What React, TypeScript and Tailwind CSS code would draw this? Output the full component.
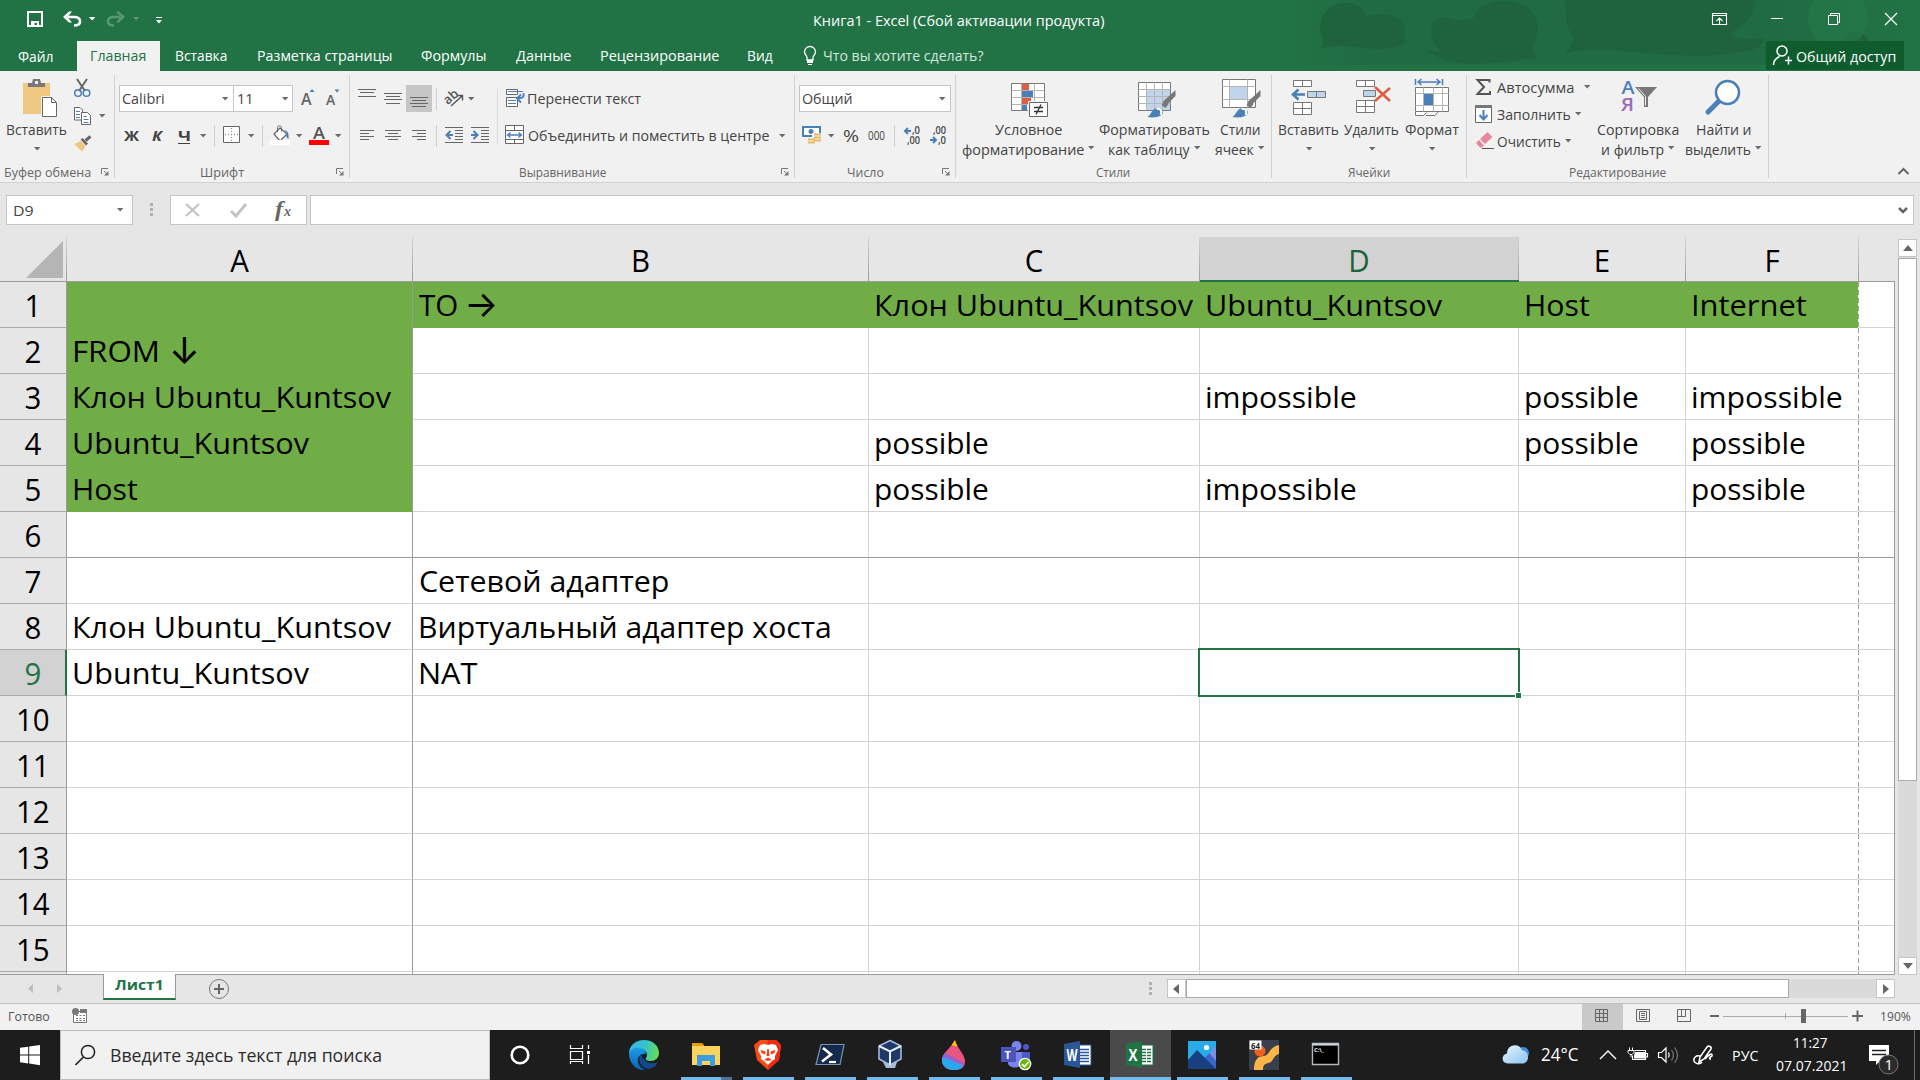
import React, { useLayoutEffect, useRef } from "react";

type TProps = { children: string; className?: string };

/* A single line of text whose glyphs are fitted to the width of its box. */
function T({ children, className = "" }: TProps) {
  const outer = useRef<HTMLSpanElement>(null);
  const inner = useRef<HTMLSpanElement>(null);
  useLayoutEffect(() => {
    if (!outer.current || !inner.current) return;
    const cs = getComputedStyle(inner.current);
    const ctx = document.createElement("canvas").getContext("2d");
    if (!ctx) return;
    ctx.font = `${cs.fontStyle} ${cs.fontWeight} ${cs.fontSize} ${cs.fontFamily}`;
    const m = ctx.measureText(children);
    const ink = m.actualBoundingBoxLeft + m.actualBoundingBoxRight;
    const s = outer.current.getBoundingClientRect().width / ink;
    inner.current.style.transform = `translateX(${m.actualBoundingBoxLeft * s}px) scaleX(${s})`;
  }, [children]);
  return (
    <span ref={outer} className={`inline-block shrink-0 whitespace-nowrap text-left ${className}`}>
      <span ref={inner} className="inline-block origin-left">
        {children}
      </span>
    </span>
  );
}

type IProps = { x: number; y: number; w: number; h: number; className?: string; children?: React.ReactNode };
function I({ x, y, w, h, className = "", children }: IProps) {
  return (
    <svg width={w} height={h} viewBox={`${x} ${y} ${w} ${h}`} className={`block shrink-0 ${className}`} fill="none">
      {children}
    </svg>
  );
}

function Caret({ className = "", color = "#6a6a6a" }: { className?: string; color?: string }) {
  return (
    <svg width="7" height="4" viewBox="0 0 7 4" className={`block shrink-0 ${className}`}>
      <path d="M0 0h6.4L3.2 3.5z" fill={color} />
    </svg>
  );
}

function Launcher() {
  return (
    <svg width="8" height="8" viewBox="0 0 8 8" className="ml-auto mr-[5px] block" fill="none">
      <path d="M.5 6V.5H7M3 3l3 3" stroke="#777" />
      <path d="M7.5 3v4.5H3z" fill="#777" />
    </svg>
  );
}

const Sep = ({ className = "" }: { className?: string }) => <span className={`h-[22px] w-px shrink-0 bg-[#d0d0d0] ${className}`} />;

function Group({ className, label, launcher = false, children }: { className: string; label: React.ReactNode; launcher?: boolean; children: React.ReactNode }) {
  return (
    <div className={`flex h-[111px] shrink-0 ${className}`}>
      <div className="flex min-w-0 flex-1 flex-col">
        <div className="flex h-[93px]">{children}</div>
        <div className="flex h-[16px] items-center text-[13px] leading-[16px] text-[#666]">
          {label}
          {launcher && <Launcher />}
        </div>
      </div>
      <div className="my-1 w-px bg-[#d2d2d2]" />
    </div>
  );
}

function Big({ x, w, className = "", icon, line1, line2 }: { x: number; w: number; className?: string; icon: React.ReactNode; line1: React.ReactNode; line2?: React.ReactNode }) {
  return (
    <div className={`flex shrink-0 flex-col items-center leading-5 ${className}`}>
      <I x={x} y={71} w={w} h={48}>{icon}</I>
      <div className="flex h-5">{line1}</div>
      <div className="flex h-5 items-center justify-center">
        {line2}
        <Caret className={line2 ? "-mt-0.5 ml-1" : "ml-px"} />
      </div>
    </div>
  );
}

const G = "#777";
const B = "#4a7fb8";

function TitleBar() {
  return (
    <div className="relative h-[71px] bg-[#217346] text-[15px] text-white">
      <svg width="640" height="65" viewBox="1280 0 640 65" className="absolute left-[1280px] top-0">
        <defs>
          <linearGradient id="fade" x1="0" x2="1" y1="0" y2="0">
            <stop offset="0" stopColor="#206b42" stopOpacity="0" />
            <stop offset=".15" stopColor="#206b42" />
            <stop offset=".75" stopColor="#206b42" />
            <stop offset="1" stopColor="#217346" />
          </linearGradient>
        </defs>
        <path d="M1280 0h640v65h-640z" fill="url(#fade)" />
        <path d="M1320 49c6-6 2-12 0-19 0-18 12-28 27-27 9 0 16 5 20 13 12-3 25-2 33 3 8 7 4 16 4 21 6 2-6 8-14 8-20 4-52-7-70 1zM1431 31c0-12 8-16 20-12 9 4 14-2 21 1 6-14 18-20 33-19 20 0 33 13 33 28 0 8-4 14-6 20l5 11c-12-4-24 4-42 2-20 3-50 3-69-12 5 2 12 1 16 2-7-6-11-12-11-21zM1565 0h189c2 18-14 26-24 34 8 6 24 6 35 4-4 10-12 14-26 14-52 10-110-4-151-1-10 0-18 0-23 4 4-9 12-15 6-21-6-10-4-22-6-34zM1843 41c4-12 20-12 26 0z" fill="#1f633c" />
        <circle cx="1838" cy="18" r="30" fill="#247a4b" opacity=".6" />
      </svg>
      <div className="relative flex h-[41px]">
        <I x={26} y={0} w={18} h={41} className="ml-[26px]">
          <path d="M28 12h14v14H28z" stroke="#fff" strokeWidth="2" />
          <path d="M31 21h8v5h-2v-3h-2.500v3H31z" fill="#fff" />
        </I>
        <I x={62} y={0} w={20} h={41} className="ml-[18px]">
          <path d="M68 17h6c4 0 6 2 6 4.500S78 25.500 74 25.500" stroke="#fff" strokeWidth="2.600" />
          <path d="M69 11.500 63 17l6 5.500h3L67.500 17 72 11.500z" fill="#fff" />
        </I>
        <Caret color="#fff" className="ml-[7px] mt-[17px]" />
        <I x={106} y={0} w={20} h={41} className="ml-[10px] opacity-25">
          <path d="M120 17h-6c-4 0-6 2-6 4.500s2 4 6 4" stroke="#fff" strokeWidth="2.600" />
          <path d="m119 11.500 6 5.500-6 5.500h-3l4.500-5.500-4.500-5.500z" fill="#fff" />
        </I>
        <Caret color="#5b9675" className="ml-[7px] mt-[17px]" />
        <I x={155} y={0} w={8} h={41} className="ml-[15px]">
          <path d="M156 17.500h6" stroke="#fff" />
          <path d="M156 20h6l-3 3.500z" fill="#fff" />
        </I>
        <T className="ml-[651px] w-[290px] leading-[41px]">Книга1 - Excel (Сбой активации продукта)</T>
        <I x={1711} y={0} w={17} h={41} className="ml-[607px]">
          <path d="M1712.500 13.500h14v11h-14zM1712.500 15.500h14M1719.500 24v-6m-3 3 3-3 3 3" stroke="#fff" strokeWidth="1.100" />
        </I>
        <I x={1770} y={0} w={14} h={41} className="ml-[42px]">
          <path d="M1771 18.500h12" stroke="#fff" />
        </I>
        <I x={1827} y={0} w={14} h={41} className="ml-[43px]">
          <path d="M1828.500 15.500h9v9h-9zM1830.500 15v-1.500h9v9h-2" stroke="#fff" />
        </I>
        <I x={1884} y={0} w={14} h={41} className="ml-[43px]">
          <path d="m1885 13 12 12m0-12-12 12" stroke="#fff" strokeWidth="1.200" />
        </I>
      </div>
      <div className="relative flex h-[30px] leading-[29px]">
        <T className="ml-[18px] mt-px w-[35px]">Файл</T>
        <div className="ml-[24px] flex w-[83px] bg-[#f1f1f1] text-[#217346]">
          <T className="ml-[14px] w-[55px]">Главная</T>
        </div>
        <T className="ml-[16px] w-[51px]">Вставка</T>
        <T className="ml-[31px] w-[134px]">Разметка страницы</T>
        <T className="ml-[29px] w-[65px]">Формулы</T>
        <T className="ml-[30px] w-[55px]">Данные</T>
        <T className="ml-[30px] w-[118px]">Рецензирование</T>
        <T className="ml-[29px] w-[25px]">Вид</T>
        <I x={802} y={41} w={16} h={30} className="ml-[29px]">
          <path d="M807 60v-2.500c0-2-2.500-3-2.500-5.500a5.500 5.500 0 0 1 11 0c0 2.500-2.500 3.500-2.500 5.500V60z" stroke="#fff" strokeWidth="1.300" />
          <path d="M807 60h6v3h-6zM808 64h4v1h-4z" fill="#fff" />
        </I>
        <T className="ml-[6px] w-[160px] text-[#d3e6dc]">Что вы хотите сделать?</T>
        <div className="ml-[782px] flex h-[29px] w-[138px] bg-[#0f5c2f]">
          <I x={1766} y={41} w={28} h={29}>
            <circle cx="1782" cy="51" r="5" stroke="#fff" strokeWidth="1.500" />
            <path d="M1773.500 65c0-5 3-7 6-8.500M1785 60.500h7m-3.500-4v8" stroke="#fff" strokeWidth="1.500" />
          </I>
          <T className="ml-[2px] w-[99px] leading-[31px]">Общий доступ</T>
        </div>
      </div>
    </div>
  );
}

const lines = (rows: [number, number, number][], color = "#666") =>
  rows.map(([x1, x2, y], i) => <path key={i} d={`M${x1} ${y}H${x2}`} stroke={color} />);

const brush = (x: number, y: number) => (
  <g>
    <path d={`M${x + 28} ${y}v6l-9 9-4-3z`} fill="#777" />
    <path d={`m${x + 17} ${y + 11} 4 3-3 4-4-3z`} fill="#777" />
    <path d={`M${x} ${y + 27}c3-2 4-6 7-8 4-3 10 1 8 5-2 3-9 4-15 3z`} fill={B} />
    <path d={`M${x + 9} ${y + 19}c4-1 6 2 4 6`} stroke="#fff" strokeWidth="2" />
  </g>
);

function Ribbon() {
  return (
    <div className="flex h-[112px] border-b border-[#d2d2d2] bg-[#f1f1f1] text-[15px] text-[#444]">
      <Group className="w-[115px]" launcher label={<T className="ml-[5px] w-[86px]">Буфер обмена</T>}>
        <Big
          className="w-[73px]"
          x={0}
          w={73}
          icon={
            <>
              <path d="M23 83h27v31H23z" fill="#edc87e" />
              <path d="M28 87v-4h4l1-4h7l1 4h4v4z" fill="#777" />
              <path d="M35 81h3v3h-3z" fill="#f1f1f1" />
              <path d="M41 96h16v22H41z" fill="#f1f1f1" />
              <path d="M42.500 97.500h9l5 5v14h-14zM51.500 97.500v5h5" fill="#fff" stroke="#666" />
            </>
          }
          line1={<T className="w-[60px]">Вставить</T>}
        />
        <div className="flex flex-col">
          <I x={73} y={77} w={20} h={25} className="mt-[6px]">
            <path d="m77 79 8 12M87 79l-8 12" stroke="#666" strokeWidth="2" />
            <circle cx="78" cy="93" r="3.300" stroke={B} strokeWidth="1.500" />
            <circle cx="86.500" cy="93" r="3.300" stroke={B} strokeWidth="1.500" />
          </I>
          <div className="flex">
            <I x={73} y={102} w={20} h={28}>
              <path d="M74.500 107.500h5.500l2.500 2.500v10h-8z" fill="#fff" stroke="#666" />
              <path d="M81.500 112.500h6l3 3v9h-9z" fill="#fff" stroke="#666" />
              <path d="M76 111.500h4M76 114.500h4M76 117.500h4M83.500 116.500h3M83.500 119.500h5M83.500 122.500h5" stroke={B} />
            </I>
            <Caret className="ml-[6px] mt-[12px]" />
          </div>
          <I x={73} y={130} w={20} h={25}>
            <path d="m74.500 144 6-3 5 5-3 5.500c-3-2-5-4-8-7.500z" fill="#edc87e" />
            <path d="m80.500 139.500 2-1.500 5.500 5.500-2 2z" fill="#666" />
            <path d="m85.500 140.500 5-4" stroke="#666" strokeWidth="3" />
          </I>
        </div>
      </Group>

      <Group className="w-[235px]" launcher label={<T className="ml-[86px] w-[43px]">Шрифт</T>}>
        <div className="flex flex-col">
          <div className="mt-[14px] flex h-[27px]">
            <div className="ml-[4px] flex w-[115px] items-center border border-[#c6c6c6] bg-white">
              <T className="ml-[2px] w-[42px]">Calibri</T>
              <Caret className="ml-auto mr-[4px]" />
            </div>
            <div className="-ml-px flex w-[60px] items-center border border-[#c6c6c6] bg-white">
              <T className="ml-[4px] w-[13px]">11</T>
              <Caret className="ml-auto mr-[3px]" />
            </div>
            <I x={299} y={85} w={20} h={27} className="ml-[6px]">
              <text x="301" y="105" fontSize="16" fontWeight="600" fill="#666" textLength="11">A</text>
              <path d="m309.500 92 2.500-3 2.500 3z" fill={B} />
            </I>
            <I x={324} y={85} w={20} h={27} className="ml-[5px]">
              <text x="326" y="105" fontSize="14" fontWeight="600" fill="#666" textLength="10">A</text>
              <path d="m334.500 89.500 2.500 3 2.500-3z" fill={B} />
            </I>
          </div>
          <div className="mt-[10px] flex h-[27px] items-center font-bold">
            <T className="ml-[9px] w-[16px]">Ж</T>
            <T className="ml-[12px] w-[12px] italic">К</T>
            <T className="ml-[14px] w-[12px] border-b border-[#444] leading-[15px]">Ч</T>
            <Caret className="ml-[10px]" />
            <Sep className="ml-[7px]" />
            <I x={222} y={122} w={19} h={27} className="ml-[7px]">
              <path d="M223.500 126.500h16v16h-16z" fill="#fff" stroke="#666" />
              <path d="M231.500 128v14M225 134.500h14" stroke="#888" strokeDasharray="1 2" strokeWidth="1.300" />
            </I>
            <Caret className="ml-[7px]" />
            <Sep className="ml-[7px]" />
            <I x={269} y={122} w={22} h={27} className="ml-[6px]">
              <path d="m274 134 6-6 7 6-7 7z" fill="#fff" stroke="#666" strokeWidth="1.200" />
              <path d="M277.500 132v-4.500c0-2 4-2 4 0v4" stroke="#666" />
              <path d="M284 130c4 1 5 3 4.500 9-2-1-3-3-2-6z" fill={B} />
              <path d="M270 140h20v5h-20z" fill="#fff" />
            </I>
            <Caret className="ml-[5px]" />
            <I x={308} y={122} w={22} h={27} className="ml-[5px]">
              <text x="313" y="139" fontSize="17" fontWeight="600" fill="#555" textLength="12" lengthAdjust="spacingAndGlyphs">A</text>
              <path d="M309 140h20v5h-20z" fill="#f00" />
            </I>
            <Caret className="ml-[5px]" />
          </div>
        </div>
      </Group>

      <Group className="w-[445px]" launcher label={<T className="ml-[170px] w-[86px]">Выравнивание</T>}>
        <div className="flex w-[147px] flex-col">
          <div className="mt-[14px] flex h-[27px] items-center">
            <I x={354} y={85} w={26} h={27} className="ml-[4px]">
              {lines([[358, 376, 89.500], [360, 374, 92.500], [358, 376, 96.500]])}
            </I>
            <I x={380} y={85} w={26} h={27}>
              {lines([[384, 402, 93.500], [386, 400, 96.500], [384, 402, 99.500], [386, 400, 103.500]])}
            </I>
            <I x={406} y={85} w={26} h={27} className="bg-[#c6c6c6]">
              {lines([[410, 428, 97.500], [412, 426, 100.500], [410, 428, 103.500], [412, 426, 106.500]])}
            </I>
            <Sep className="ml-[4px]" />
            <I x={443} y={85} w={22} h={27} className="ml-[6px]">
              <text x="445" y="104" fontSize="13" fill="#555" fontWeight="600" transform="rotate(-42 448 101)">ab</text>
              <path d="m451 106 11-10m-4.500-.500h5v5" stroke="#555" strokeWidth="1.400" />
            </I>
            <Caret className="ml-[3px]" />
          </div>
          <div className="mt-[10px] flex h-[27px] items-center">
            <I x={354} y={122} w={26} h={27} className="ml-[4px]">
              {lines([[360, 374, 130.500], [360, 369, 133.500], [360, 374, 136.500], [360, 369, 139.500]])}
            </I>
            <I x={380} y={122} w={26} h={27}>
              {lines([[385, 401, 130.500], [388, 398, 133.500], [385, 401, 136.500], [388, 398, 139.500]])}
            </I>
            <I x={406} y={122} w={26} h={27}>
              {lines([[412, 426, 130.500], [417, 426, 133.500], [412, 426, 136.500], [417, 426, 139.500]])}
            </I>
            <Sep className="ml-[4px]" />
            <I x={443} y={122} w={22} h={27} className="ml-[6px]">
              {lines([[445, 463, 127.500], [455, 463, 130.500], [455, 463, 133.500], [455, 463, 136.500], [455, 463, 139.500], [445, 463, 142.500]])}
              <path d="M453 135h-6m3.500-4-4 4 4 4" stroke={B} strokeWidth="2" />
            </I>
            <I x={469} y={122} w={22} h={27} className="ml-[4px]">
              {lines([[471, 489, 127.500], [481, 489, 130.500], [481, 489, 133.500], [481, 489, 136.500], [481, 489, 139.500], [471, 489, 142.500]])}
              <path d="M471 135h6m-3.500-4 4 4-4 4" stroke={B} strokeWidth="2" />
            </I>
          </div>
        </div>
        <div className="mt-[18px] h-[56px] w-px bg-[#dcdcdc]" />
        <div className="flex flex-col">
          <div className="mt-[14px] flex h-[27px] items-center">
            <I x={504} y={85} w={22} h={27} className="ml-[6px]">
              <path d="M506.500 89.500h11v5h-11zM506.500 97.500h11v9h-11z" fill="#fff" stroke="#666" />
              <path d="M508 91.500h15M508 100.500h8M508 103.500h8" stroke={B} strokeWidth="1.200" />
              <path d="M523.500 93c1 4-1 5.500-6 5.500m3.500-4-4 4 4 4" stroke={B} strokeWidth="1.800" />
            </I>
            <T className="ml-[2px] w-[113px]">Перенести текст</T>
          </div>
          <div className="mt-[10px] flex h-[27px] items-center">
            <I x={504} y={122} w={22} h={27} className="ml-[6px]">
              <path d="M505.500 125.500h18v18h-18zM505.500 130.500h18M505.500 139.500h18M514.500 125.500v5M514.500 139.500v4" fill="#fff" stroke="#666" />
              <path d="M507.500 135h14m-11-2.500-3 2.500 3 2.500m8-5 3 2.500-3 2.500" stroke={B} strokeWidth="1.300" />
            </I>
            <T className="ml-[2px] w-[241px]">Объединить и поместить в центре</T>
            <Caret className="ml-[10px]" />
          </div>
        </div>
      </Group>

      <Group className="w-[161px]" launcher label={<T className="ml-[53px] w-[36px]">Число</T>}>
        <div className="flex flex-col">
          <div className="ml-[4px] mt-[14px] flex h-[27px] w-[152px] items-center border border-[#c6c6c6] bg-white">
            <T className="ml-[2px] w-[50px]">Общий</T>
            <Caret className="ml-auto mr-[4px]" />
          </div>
          <div className="mt-[10px] flex h-[27px] items-center">
            <I x={801} y={122} w={23} h={27} className="ml-[6px]">
              <path d="M802 126h19v11h-19z" fill={B} />
              <path d="M804 128h15v7h-15z" fill="#fff" />
              <circle cx="811" cy="131.500" r="2.500" fill={B} />
              <path d="M812 133h10v12h-15v-7h5z" fill="#f1f1f1" />
              <path d="M814 134.500h7M814 137.500h7M814 140.500h7M808 139.500h7M808 142.500h7" stroke="#e6b96a" strokeWidth="2" />
            </I>
            <Caret className="ml-[4px]" />
            <T className="ml-[8px] w-[16px] text-[17px]">%</T>
            <T className="ml-[9px] w-[17px] text-[12px]">000</T>
            <Sep className="ml-[9px]" />
            <I x={903} y={122} w={18} h={27} className="ml-[8px]">
              <path d="M911 131h-6m3-3-3 3 3 3" stroke={B} strokeWidth="2" />
              <text x="912" y="134" fontSize="10" fill="#444" fontWeight="600" textLength="8" lengthAdjust="spacingAndGlyphs">,0</text>
              <text x="907" y="144" fontSize="10" fill="#444" fontWeight="600" textLength="13" lengthAdjust="spacingAndGlyphs">,00</text>
            </I>
            <I x={929} y={122} w={18} h={27} className="ml-[8px]">
              <path d="M930 140h6m-3-3 3 3-3 3" stroke={B} strokeWidth="2" />
              <text x="933" y="134" fontSize="10" fill="#444" fontWeight="600" textLength="13" lengthAdjust="spacingAndGlyphs">,00</text>
              <text x="938" y="144" fontSize="10" fill="#444" fontWeight="600" textLength="8" lengthAdjust="spacingAndGlyphs">,0</text>
            </I>
          </div>
        </div>
      </Group>

      <Group className="w-[316px]" label={<T className="ml-[140px] w-[34px]">Стили</T>}>
        <Big
          className="ml-[3px] w-[138px]"
          x={959}
          w={138}
          icon={
            <>
              <path d="M1011.500 83.500h33v27h-33z" fill="#fff" stroke={G} />
              <path d="M1011.500 90.500h33M1011.500 97.500h33M1011.500 104.500h33M1021.500 83.500v27M1034.500 83.500v27" stroke="#b5b5b5" />
              <path d="M1022 84h7v6h-7zM1022 98h9v6h-9z" fill="#dc5f41" />
              <path d="M1022 91h11v6h-11zM1022 105h5v5h-5z" fill={B} />
              <path d="M1028 101h22v17h-22z" fill="#f1f1f1" />
              <path d="M1029.500 102.500h18v14h-18z" fill="#fff" stroke="#666" />
              <path d="M1034 107.500h9M1034 111.500h9M1041 104.500l-5 10" stroke="#333" strokeWidth="1.300" />
            </>
          }
          line1={<T className="w-[67px]">Условное</T>}
          line2={<T className="w-[122px]">форматирование</T>}
        />
        <Big
          className="w-[115px]"
          x={1097}
          w={115}
          icon={
            <>
              <path d="M1138.500 82.500h32v28h-32z" fill="#fff" stroke={G} />
              <path d="M1147 90h23v20h-23z" fill="#c0d4ea" />
              <path d="M1138.500 89.500h32M1138.500 96.500h32M1138.500 103.500h32M1146.500 82.500v28M1154.500 82.500v28M1162.500 82.500v28" stroke="#b5b5b5" />
              {brush(1147.500, 90)}
            </>
          }
          line1={<T className="w-[111px]">Форматировать</T>}
          line2={<T className="w-[81px]">как таблицу</T>}
        />
        <Big
          className="w-[55px]"
          x={1212}
          w={55}
          icon={
            <>
              <path d="M1222.500 79.500h33v28h-33z" fill="#fff" stroke={G} />
              <path d="M1222.500 86.500h33M1222.500 99.500h33M1229.500 79.500v28M1247.500 79.500v28" stroke="#b5b5b5" />
              <path d="M1230 87h17v12h-17z" fill="#c0d4ea" />
              {brush(1232.500, 90)}
            </>
          }
          line1={<T className="w-[40px]">Стили</T>}
          line2={<T className="w-[39px]">ячеек</T>}
        />
      </Group>

      <Group className="w-[195px]" label={<T className="ml-[76px] w-[42px]">Ячейки</T>}>
        <Big
          className="ml-[3px] w-[67px]"
          x={1275}
          w={67}
          icon={
            <>
              <path d="M1293.500 80.500h18v6h-18zM1302.500 80.500v6M1293.500 102.500h18v12h-18zM1302.500 102.500v12M1293.500 108.500h18" fill="#fff" stroke={G} />
              <path d="M1307.500 91.500h18v6h-18zM1316.500 91.500v6" fill="#c0d4ea" stroke={G} />
              <path d="M1305 94.500h-12m5.500-5-5.500 5 5.500 5" stroke={B} strokeWidth="2.600" />
            </>
          }
          line1={<T className="w-[60px]">Вставить</T>}
        />
        <Big
          className="w-[59px]"
          x={1342}
          w={59}
          icon={
            <>
              <path d="M1356.500 80.500h18v6h-18zM1365.500 80.500v6M1356.500 100.500h18v12h-18zM1365.500 100.500v12M1356.500 106.500h18" fill="#fff" stroke={G} />
              <path d="M1363.500 90.500h12v6h-12z" fill="#c0d4ea" stroke={G} />
              <path d="m1375 87 15 14M1390 88l-15 13" stroke="#dc5f41" strokeWidth="2.600" />
            </>
          }
          line1={<T className="w-[55px]">Удалить</T>}
        />
        <Big
          className="w-[62px]"
          x={1401}
          w={62}
          icon={
            <>
              <path d="M1415.500 79v6M1442.500 79v6M1418 82h22m-18.500-3-3.500 3 3.500 3m15-6 3.500 3-3.500 3" stroke={B} strokeWidth="1.500" />
              <path d="M1415.500 87.500h33v24h-33z" fill="#fff" stroke={G} />
              <path d="M1415.500 93.500h33M1415.500 105.500h33M1423.500 87.500v24M1433.500 87.500v24M1442.500 87.500v24" stroke="#b5b5b5" />
              <path d="M1424 94h9v11h-9z" fill={B} />
              <path d="M1415.500 112v3.500h8l3-3M1426 115.500h9l3-3.500" stroke={G} fill="#fff" />
            </>
          }
          line1={<T className="w-[54px]">Формат</T>}
        />
      </Group>

      <Group className="w-[302px]" label={<T className="ml-[103px] w-[96px]">Редактирование</T>}>
        <div className="flex w-[125px] flex-col pt-[3px] leading-[27px]">
          <div className="flex h-[27px]">
            <I x={1475} y={74} w={18} h={27} className="ml-[8px]">
              <path d="M1489.500 82.500V80H1477.500l6.500 7-6.500 7h12.500v-3" stroke="#555" strokeWidth="2" />
            </I>
            <T className="ml-[4px] w-[77px]">Автосумма</T>
            <Caret className="ml-[10px] mt-[11px]" />
          </div>
          <div className="flex h-[27px]">
            <I x={1475} y={101} w={18} h={27} className="ml-[8px]">
              <path d="M1475.500 106.500h16v16h-16z" fill="#fff" stroke="#666" />
              <path d="M1475 105h17v3h-17z" fill="#777" />
              <path d="M1483.500 110v9m-4-4 4 4.500 4-4.500" stroke={B} strokeWidth="2" />
            </I>
            <T className="ml-[4px] w-[74px]">Заполнить</T>
            <Caret className="ml-[4px] mt-[11px]" />
          </div>
          <div className="flex h-[27px]">
            <I x={1475} y={128} w={19} h={27} className="ml-[8px]">
              <path d="m1480 139 7.500-7 5 5-7.500 7z" fill="#e8879a" />
              <path d="m1479 140-3 3 4 4.500h2l2-2z" fill="#e8879a" />
              <path d="M1482 148.500h12" stroke="#555" />
            </I>
            <T className="ml-[3px] w-[64px]">Очистить</T>
            <Caret className="ml-[4px] mt-[11px]" />
          </div>
        </div>
        <Big
          className="w-[92px]"
          x={1592}
          w={92}
          icon={
            <>
              <text x="1621.500" y="94" fontSize="18" fontWeight="600" fill={B} textLength="13" lengthAdjust="spacingAndGlyphs">А</text>
              <text x="1621" y="111" fontSize="18" fontWeight="600" fill="#9b6bb5" textLength="13" lengthAdjust="spacingAndGlyphs">Я</text>
              <path d="M1635 87h22l-9 10v10h-4V97z" fill="#777" />
              <path d="m1638.500 88.500 7 8v9" stroke="#f1f1f1" />
            </>
          }
          line1={<T className="w-[82px]">Сортировка</T>}
          line2={<T className="w-[62px]">и фильтр</T>}
        />
        <Big
          className="w-[79px]"
          x={1684}
          w={79}
          icon={
            <>
              <path d="m1719 101-11 11" stroke={B} strokeWidth="5" strokeLinecap="round" />
              <circle cx="1727.500" cy="92.500" r="11.500" fill="#fff" stroke={B} strokeWidth="2.500" />
            </>
          }
          line1={<T className="w-[54px]">Найти и</T>}
          line2={<T className="w-[65px]">выделить</T>}
        />
      </Group>
      <I x={1897} y={160} w={13} h={20} className="ml-[128px] mt-[88px]">
        <path d="m1898.500 175 5-5 5 5" stroke="#666" strokeWidth="2" />
      </I>
    </div>
  );
}

function FormulaBar() {
  return (
    <div className="flex h-[54px] bg-[#e6e6e6] pt-3 text-[15px] text-[#444]">
      <div className="ml-[6px] flex h-[30px] w-[127px] items-center border border-[#c6c6c6] bg-white">
        <T className="ml-[7px] w-[19px] leading-[30px]">D9</T>
        <Caret className="ml-auto mr-[8px]" />
      </div>
      <I x={149} y={195} w={5} h={30} className="ml-[16px]">
        <path d="M150 203h3v3h-3zM150 208h3v3h-3zM150 213h3v3h-3z" fill="#b0b0b0" />
      </I>
      <div className="ml-[16px] flex h-[30px] w-[137px] items-center border border-[#c6c6c6] bg-white">
        <I x={184} y={196} w={18} h={28} className="ml-[13px]">
          <path d="m186 204 13 12m0-12-13 12" stroke="#c4c4c4" strokeWidth="2.300" />
        </I>
        <I x={229} y={196} w={19} h={28} className="ml-[27px]">
          <path d="m231 211 5 5 10-12" stroke="#c4c4c4" strokeWidth="3" />
        </I>
        <span className="ml-[27px] flex text-[#666]">
          <T className="w-[11px] font-['Liberation_Serif'] text-[20px] font-bold italic leading-[22px]">f</T>
          <T className="-ml-[3px] mt-[3px] w-[8px] font-['Liberation_Serif'] text-[14px] font-bold italic leading-[22px]">x</T>
        </span>
      </div>
      <div className="ml-[3px] flex h-[30px] w-[1604px] items-center border border-[#c6c6c6] bg-white">
        <I x={1897} y={196} w={12} h={28} className="ml-auto mr-[4px]">
          <path d="m1899 208 4 4 4-4" stroke="#666" strokeWidth="2.500" />
        </I>
      </div>
    </div>
  );
}

const CLONE = <T className="w-[317px]">Клон Ubuntu_Kuntsov</T>;
const UBUNTU = <T className="w-[235px]">Ubuntu_Kuntsov</T>;
const HOST = <T className="w-[63px]">Host</T>;
const POSS = <T className="w-[112px]">possible</T>;
const IMPOSS = <T className="w-[149px]">impossible</T>;

const cells: Record<string, React.ReactNode> = {
  B1: (
    <>
      <T className="-ml-px w-[38px]">TO</T>
      <T className="-mt-0.5 ml-[11px] w-[27px] font-['Inter'] text-[37px]">→</T>
    </>
  ),
  C1: CLONE,
  D1: UBUNTU,
  E1: HOST,
  F1: <T className="w-[113px]">Internet</T>,
  A2: (
    <>
      <T className="w-[84px]">FROM</T>
      <T className="ml-[14px] w-[25px] font-['Inter'] text-[37px]">↓</T>
    </>
  ),
  A3: CLONE,
  D3: IMPOSS,
  E3: POSS,
  F3: IMPOSS,
  A4: UBUNTU,
  C4: POSS,
  E4: POSS,
  F4: POSS,
  A5: HOST,
  C5: POSS,
  D5: IMPOSS,
  F5: POSS,
  B7: <T className="w-[248px]">Сетевой адаптер</T>,
  A8: CLONE,
  B8: <T className="w-[410px]">Виртуальный адаптер хоста</T>,
  A9: UBUNTU,
  B9: <T className="w-[58px]">NAT</T>,
};

const cols: [string, string][] = [
  ["A", "w-[346px]"],
  ["B", "w-[456px]"],
  ["C", "w-[331px]"],
  ["D", "w-[319px]"],
  ["E", "w-[167px]"],
  ["F", "w-[173px]"],
];

const dash = "bg-[repeating-linear-gradient(to_bottom,#a0a0a0_0px,#a0a0a0_5px,#ffffff_5px,#ffffff_8px)]";

function Row({ n }: { n: number }) {
  const bottom = n === 6 ? "border-b-[#9b9b9b]" : "border-b-[#d4d4d4]";
  return (
    <div className="flex h-[46px] shrink-0">
      <div
        className={`flex w-[67px] shrink-0 items-center justify-center border-b border-b-[#ababab] text-[31px] ${
          n === 9 ? "border-r-2 border-r-[#217346] bg-[#d2d2d2] text-[#217346]" : "border-r border-r-[#9b9b9b] bg-[#e6e6e6]"
        }`}
      >
        {n < 16 && <span className="scale-x-95">{n}</span>}
      </div>
      {cols.map(([c, w]) => {
        const green = (n === 1 && c !== "A") || (c === "A" && n <= 5);
        const right = c === "A" ? "border-r-[#9b9b9b]" : c === "F" ? "border-r-transparent" : green ? "border-r-[#70ad47]" : "border-r-[#d4d4d4]";
        return (
          <div
            key={c}
            className={`relative flex shrink-0 items-center border-b border-r pl-[7px] pt-px ${w} ${right} ${
              green ? "border-b-[#70ad47] bg-[#70ad47]" : `bg-white ${bottom}`
            }`}
          >
            {cells[c + n]}
            {c === "F" && <span className={`absolute -right-px top-0 h-[46px] w-px ${dash}`} />}
            {c === "D" && n === 9 && (
              <span className="absolute -left-0.5 -top-0.5 z-10 h-[49px] w-[322px] border-2 border-[#217346]">
                <span className="absolute -bottom-[4px] -right-[4px] h-[7px] w-[7px] border border-white bg-[#217346]" />
              </span>
            )}
          </div>
        );
      })}
      <div className={`flex-1 border-b bg-white ${bottom}`} />
    </div>
  );
}

function Sheet() {
  return (
    <div className="flex h-[738px] bg-[#e6e6e6]">
      <div className="flex h-[738px] w-[1895px] shrink-0 flex-col overflow-hidden text-[30px] leading-[40px] text-black">
        <div className="flex h-[45px] shrink-0 border-b border-[#9b9b9b] text-[31px]">
          <div className="flex w-[67px] shrink-0 justify-end">
            <svg width="37" height="37" viewBox="0 0 37 37" className="mr-[3px] mt-[4px]">
              <path d="M37 0v37H0z" fill="#b5b5b5" />
            </svg>
            <span className="h-[44px] w-px bg-linear-to-b from-[#d4d4d4] to-[#9b9b9b]" />
          </div>
          {cols.map(([c, w]) => (
            <div key={c} className={`flex shrink-0 ${w} ${c === "D" ? "-mb-px h-[45px] border-b-2 border-[#217346] bg-[#d2d2d2] text-[#1c623b]" : "h-[44px]"}`}>
              <span className="flex-1 scale-x-95 pt-px text-center leading-[44px]">{c}</span>
              <span className="w-px bg-linear-to-b from-[#d4d4d4] to-[#9b9b9b]" />
            </div>
          ))}
        </div>
        <div className="flex h-[693px] flex-col overflow-hidden border-b border-r border-[#9b9b9b]">
          {Array.from({ length: 16 }, (_, i) => (
            <Row key={i} n={i + 1} />
          ))}
        </div>
      </div>
      <div className="ml-[3px] mt-[2px] flex h-[736px] w-[19px] flex-col bg-[#dadada]">
        <div className="flex h-[18px] items-center justify-center border border-[#c6c6c6] bg-white">
          <svg width="10" height="6"><path d="M0 6h10L5 0z" fill="#666" /></svg>
        </div>
        <div className="mt-px h-[523px] border border-[#ababab] bg-white" />
        <div className="mt-auto flex h-[18px] items-center justify-center border border-[#c6c6c6] bg-white">
          <svg width="10" height="6"><path d="M0 0h10L5 6z" fill="#666" /></svg>
        </div>
      </div>
    </div>
  );
}

function TabsBar() {
  return (
    <div className="flex h-[29px] border-b border-[#bfbfbf] bg-[#e6e6e6]">
      <I x={27} y={975} w={8} h={28} className="ml-[27px]"><path d="M33 984v9l-5-4.500z" fill="#bdbdbd" /></I>
      <I x={56} y={975} w={8} h={28} className="ml-[21px]"><path d="M57 984v9l5-4.500z" fill="#bdbdbd" /></I>
      <div className="relative -mt-px ml-[39px] flex h-[26px] w-[73px] border-x border-b-2 border-x-[#9b9b9b] border-b-[#217346] bg-white text-[15px] font-bold leading-[21px] text-[#217346]">
        <T className="ml-[11px] w-[47px]">Лист1</T>
      </div>
      <I x={208} y={975} w={22} h={28} className="ml-[32px]">
        <circle cx="219" cy="989" r="9.500" stroke="#777" />
        <path d="M214 989h10m-5-5v10" stroke="#666" strokeWidth="2" />
      </I>
      <I x={1149} y={975} w={3} h={28} className="ml-[919px]">
        <path d="M1149 982h3v3h-3zM1149 987h3v3h-3zM1149 992h3v3h-3z" fill="#b0b0b0" />
      </I>
      <div className="ml-[15px] mt-[4px] flex h-[19px] w-[728px] bg-[#dadada]">
        <div className="flex w-[19px] items-center justify-center border border-[#c6c6c6] bg-white">
          <svg width="6" height="10" className="mr-0.5"><path d="M6 0v10L0 5z" fill="#666" /></svg>
        </div>
        <div className="w-[603px] border border-[#ababab] bg-white" />
        <div className="ml-auto flex w-[19px] items-center justify-center border border-[#c6c6c6] bg-white">
          <svg width="6" height="10"><path d="M0 0v10l6-5z" fill="#666" /></svg>
        </div>
      </div>
    </div>
  );
}

function StatusBar() {
  return (
    <div className="flex h-[26px] bg-[#f1f1f1] text-[13px] leading-[25px] text-[#555]">
      <T className="ml-[9px] w-[41px]">Готово</T>
      <I x={71} y={1004} w={18} h={26} className="ml-[21px]">
        <path d="M73.500 1011.500h13v11h-13z" fill="#fff" stroke="#777" />
        <path d="M80 1009h7v4h-7z" fill="#777" />
        <circle cx="75.500" cy="1011.500" r="3.500" fill="#777" />
        <path d="M76 1015.500h9M76 1018.500h9M76 1020.500h9" stroke="#777" strokeDasharray="2 1.500" />
      </I>
      <I x={1582} y={1004} w={41} h={26} className="ml-[1493px] bg-[#c9c9c9]">
        <path d="M1595.500 1009.500h12v12h-12zM1599.500 1009.500v12M1603.500 1009.500v12M1595.500 1013.500h12M1595.500 1017.500h12" stroke="#666" />
      </I>
      <I x={1623} y={1004} w={41} h={26}>
        <path d="M1636.500 1009.500h13v12h-13zM1639.500 1011.500h7v8h-7zM1641 1013.500h4M1641 1015.500h4M1641 1017.500h4" stroke="#666" />
      </I>
      <I x={1664} y={1004} w={41} h={26}>
        <path d="M1677.500 1009.500h13v12h-13zM1677.500 1016.500h8v-7M1681.500 1009.500v7" stroke="#666" />
      </I>
      <I x={1705} y={1004} w={165} h={26}>
        <path d="M1710 1016h9M1852 1016h11m-5.500-5.500v11" stroke="#666" strokeWidth="2" />
        <path d="M1723 1016.500h125M1785.500 1013v6" stroke="#ababab" />
        <path d="M1801 1009h5v14h-5z" fill="#666" />
      </I>
      <T className="ml-[11px] w-[30px]">190%</T>
    </div>
  );
}

function TaskItem({ x, className = "", children, half = false }: { x: number; className?: string; children: React.ReactNode; half?: boolean }) {
  return (
    <div className={`flex h-[50px] w-[51px] flex-col ${className}`}>
      <I x={x} y={1030} w={51} h={47}>{children}</I>
      <div className="flex h-[3px]">
        <span className={`h-[3px] bg-[#76b9ed] ${half ? "w-[40px]" : "flex-1"}`} />
        {half && <span className="h-[3px] flex-1 bg-[#4f7596]" />}
      </div>
    </div>
  );
}

function Office({ x, color, dark, letter }: { x: number; color: string; dark: string; letter: string }) {
  return (
    <>
      <path d={`M${x + 14} 1045h13v20h-13z`} fill="#fff" stroke={color} />
      <path d={`M${x + 16} 1049.500h9M${x + 16} 1052.500h9M${x + 16} 1055.500h9M${x + 16} 1058.500h9M${x + 16} 1061.500h9`} stroke={color} strokeWidth="1.500" />
      {letter === "X" && <path d={`M${x + 20.5} 1047v17`} stroke="#fff" />}
      <path d={`M${x} 1044l16-3v27l-16-3z`} fill={dark} />
      <text x={x + 2.5} y="1060.500" fontSize="16" fontWeight="700" fill="#fff" textLength={letter === "W" ? 11 : 9} lengthAdjust="spacingAndGlyphs">{letter}</text>
    </>
  );
}

function Taskbar() {
  return (
    <div className="flex h-[50px] bg-[#1d1d1d] text-white">
      <I x={0} y={1030} w={60} h={50}>
        <path d="M20 1047.800 28.200 1046.700v7.800H20zM29.200 1046.500 40 1045v9.500H29.200zM20 1055.500h8.200v8l-8.200-1.200zM29.200 1055.500H40v9.700l-10.800-1.600z" fill="#fff" />
      </I>
      <div className="flex w-[430px] border border-[#bdbdbd] bg-[#f1f1f1] text-[18px] leading-[49px] text-[#2b2b2b]">
        <I x={75} y={1031} w={21} h={48} className="ml-[14px]">
          <circle cx="88" cy="1052" r="6.600" stroke="#222" strokeWidth="1.500" />
          <path d="m83.500 1057-8 8" stroke="#222" strokeWidth="1.600" />
        </I>
        <T className="ml-[15px] w-[270px]">Введите здесь текст для поиска</T>
      </div>
      <I x={490} y={1030} w={60} h={50}>
        <circle cx="520" cy="1055" r="8.300" stroke="#fff" strokeWidth="2.600" />
      </I>
      <I x={550} y={1030} w={60} h={50}>
        <path d="M570.500 1045v3.500h12V1045M570.500 1051.500h12v8h-12zM570.500 1064v-2.500h12v2.500M588.500 1045v4M588.500 1055v9" stroke="#fff" strokeWidth="1.200" />
        <path d="M587 1051h3v3h-3z" fill="#fff" />
      </I>
      <I x={610} y={1030} w={71} h={50}>
        <defs>
          <linearGradient id="edgeTop" x1="629" x2="659" y1="1045" y2="1053" gradientUnits="userSpaceOnUse">
            <stop stopColor="#36b8e8" />
            <stop offset=".5" stopColor="#35c1d0" />
            <stop offset="1" stopColor="#67de4c" />
          </linearGradient>
          <linearGradient id="edgeLow" x1="0" x2="0" y1="0" y2="1">
            <stop stopColor="#1b9de2" />
            <stop offset="1" stopColor="#0a5fb8" />
          </linearGradient>
        </defs>
        <path d="M629 1054c0-9 7-14 15-14 9 0 15 6 15 13 0 5-4 8-8 8-4 0-6-1-5-3 3-5-1-9-6-9-5-1-9 2-11 5z" fill="url(#edgeTop)" />
        <path d="M629 1053c2-4 6-6 10-5 4 0 7 3 7 6-5-1-9 3-8 8 1 4 3 6 7 8-9 1-16-7-16-17z" fill="url(#edgeLow)" />
        <path d="M641 1054c-4 5-1 14 8 15 4-1 7-3 9-7-7 3-14 1-17-8z" fill="#12498c" />
      </I>
      <TaskItem x={681} half>
        <path d="M692 1043h10l2 2v6h-12z" fill="#e2a100" />
        <path d="M692 1046h28v19h-28z" fill="#ffd45e" />
        <path d="M697 1066v-11h18v11h-5v-5h-8v5z" fill="#3d9be0" />
      </TaskItem>
      <TaskItem x={743} className="ml-[11px]">
        <path d="m760 1040h16l5 5-2 15-11 10-11-10-3-15z" fill="#fb4b14" />
        <path d="m768 1040h8l5 5-2 15-11 10z" fill="#f22a10" />
        <path d="m760 1045 4-1 4 1 4-1 4 1 2 5-3 6v3l-3 2-4 4-4-4-3-2v-3l-3-6z" fill="#fff" />
        <path d="m760.500 1050 5 1.500-.500 3-3.500-1.500zM775.500 1050l-5 1.500.500 3 3.500-1.500zM764 1060l4-2.500 4 2.500-4 1zM767.300 1049h1.400l.8 7h-3zM763 1046.500l2.500 1.500M773 1046.500l-2.500 1.500" fill="#fb3f14" />
      </TaskItem>
      <TaskItem x={805} className="ml-[11px]">
        <path d="M821 1044.500h23l-4 20h-24z" fill="#15294a" stroke="#7a93b4" strokeWidth="1.200" />
        <path d="m823 1048 8 6.500-9 7" stroke="#fff" strokeWidth="2.600" />
        <path d="M829 1062h7" stroke="#fff" strokeWidth="2.200" />
      </TaskItem>
      <TaskItem x={867} className="ml-[11px]">
        <path d="M883 1062h14l-2 6h-9z" fill="#a9bcd8" />
        <path d="m890 1040.500 11 5.500v13l-11 6-11-6v-13z" fill="#1f3a68" stroke="#a9bfe0" strokeWidth="1.500" />
        <path d="m879 1046 11 5.500 11-5.500M890 1051.500v13.500" stroke="#e8eef8" strokeWidth="2" />
      </TaskItem>
      <TaskItem x={929} className="ml-[11px]">
        <defs>
          <clipPath id="drop"><path d="M955 1040c1 7 10 14 10 21s-5 9-11.500 9-11.500-4-11.500-10c0-7 9-12 13-20z" /></clipPath>
        </defs>
        <g clipPath="url(#drop)">
          <path d="M940 1040h28v32h-28z" fill="#e8557f" />
          <path d="M950 1040h10v7l-9-2z" fill="#fc0" />
          <path d="M940 1050c8 5 14 6 26 15l-4 8h-22z" fill="#9a62c8" />
          <path d="M940 1057c8 1 12 5 22 8l-2 8h-20z" fill="#27a9f0" />
        </g>
      </TaskItem>
      <TaskItem x={991} className="ml-[11px]">
        <circle cx="1016.500" cy="1046" r="5" fill="#7b83eb" />
        <circle cx="1026" cy="1047" r="3" fill="#5059c9" />
        <path d="M1021 1052h9v9c0 4-6 6-9 3z" fill="#5059c9" />
        <path d="M1008 1052h14v10c0 6-10 8-14 2z" fill="#7b83eb" />
        <path d="M1001 1047h15v15h-15z" fill="#4b53bc" />
        <text x="1004.500" y="1059" fontSize="11" fontWeight="700" fill="#fff">T</text>
        <circle cx="1025" cy="1064" r="5.700" fill="#6bb700" stroke="#fff" strokeWidth="1.300" />
        <path d="m1022 1064 2.500 2.500 4-4.500" stroke="#fff" strokeWidth="1.600" />
      </TaskItem>
      <TaskItem x={1053} className="ml-[11px]">
        <Office x={1064} color="#2b579a" dark="#2b5797" letter="W" />
      </TaskItem>
      <div className="ml-[6px] flex w-[61px] flex-col bg-[#4a4a4a]">
        <I x={1110} y={1030} w={61} h={47}>
          <Office x={1126} color="#217346" dark="#217346" letter="X" />
        </I>
        <span className="h-[3px] bg-[#76b9ed]" />
      </div>
      <TaskItem x={1177} className="ml-[6px]">
        <path d="M1188 1041h28v28h-28z" fill="#29abe8" />
        <path d="M1204 1058l6-5 6 6v10h-28v-6z" fill="#3a66cc" />
        <path d="M1216 1045v16l-6-7z" fill="#7f8de0" />
        <path d="m1188 1060 9-10 19 19h-28z" fill="#17407f" />
        <circle cx="1206.500" cy="1047.500" r="2.600" fill="#fff" />
      </TaskItem>
      <TaskItem x={1239} className="ml-[11px]">
        <path d="M1249 1040h30v30h-30z" fill="#3a3f4c" />
        <path d="M1254 1070c0-9 3-14 10-14 6-1 5-9 15-11v9c-6 1-5 8-11 9-4 1-5 3-5 7z" fill="#ffb545" />
        <circle cx="1260" cy="1051" r="5.500" fill="#f2601c" />
        <path d="M1249.500 1040.500h12v9h-12z" fill="#fff" />
        <text x="1251" y="1048.500" fontSize="8.500" fontWeight="700" fill="#222" textLength="9" lengthAdjust="spacingAndGlyphs">64</text>
      </TaskItem>
      <TaskItem x={1301} className="ml-[11px]">
        <path d="M1312.500 1043.500h26v21h-26z" fill="#000" stroke="#b5b5b5" strokeWidth="1.400" />
        <path d="M1312.500 1044.500h26" stroke="#c8d0d8" strokeWidth="2.200" />
        <text x="1314" y="1052" fontSize="6" fill="#eee" fontWeight="700" textLength="10">C:\_</text>
      </TaskItem>
      <I x={1501} y={1030} w={30} h={50} className="ml-[149px]">
        <defs>
          <linearGradient id="cloud" x1="0" x2="1" y1="0" y2="1">
            <stop stopColor="#e8f6ff" />
            <stop offset="1" stopColor="#8cc4f0" />
          </linearGradient>
        </defs>
        <circle cx="1523" cy="1053" r="6" fill="#3e8fd8" />
        <path d="M1508 1063.500c-7 0-7-9-1-10 0-10 13-11 15-3 7-1 9 13 0 13z" fill="url(#cloud)" />
      </I>
      <T className="ml-[10px] w-[37px] text-[18px] leading-[49px]">24°C</T>
      <I x={1599} y={1030} w={18} h={50} className="ml-[21px]">
        <path d="m1600 1059 8-8 8 8" stroke="#fff" strokeWidth="1.400" />
      </I>
      <I x={1627} y={1030} w={23} h={50} className="ml-[10px]">
        <path d="M1634.500 1050.500h11v9h-13v-4M1646 1053.500h1.500v3.500h-1.500" stroke="#fff" strokeWidth="1.200" />
        <path d="M1635 1052h10v6.500h-11v-3z" fill="#fff" />
        <path d="M1629.500 1047.500v3M1632.500 1047.500v3M1628 1050.500h6v2l-2 2h-2l-2-2zM1631 1054v3" stroke="#fff" />
      </I>
      <I x={1657} y={1030} w={22} h={50} className="ml-[7px]">
        <path d="M1658.500 1052.500h3l4.500-4.500v14l-4.500-4.500h-3z" stroke="#fff" strokeWidth="1.200" />
        <path d="M1668.500 1052.500c1 2 1 3.500 0 5" stroke="#fff" strokeWidth="1.200" />
        <path d="M1671.500 1050c2.500 3.500 2.500 7 0 10.500M1674.500 1047.500c4 5 4 10.500 0 15.500" stroke="#777" strokeWidth="1.200" />
      </I>
      <I x={1692} y={1030} w={22} h={50} className="ml-[13px]">
        <path d="m1699 1062 1-5 7-10c2-2 5 0 4 2l-7 10zM1700 1056c-4-1-7 2-6 5s6 4 8 1M1705 1059c3-4 8-7 7-3-2 1-4 3-1 3" stroke="#fff" strokeWidth="1.500" />
      </I>
      <T className="ml-[19px] w-[25px] text-[15px] leading-[50px]">РУС</T>
      <div className="ml-[18px] flex w-[69px] flex-col items-center pt-px text-[15px] leading-[23px]">
        <T className="w-[33px]">11:27</T>
        <T className="w-[69px]">07.07.2021</T>
      </div>
      <I x={1867} y={1030} w={34} h={50} className="ml-[22px]">
        <path d="M1869 1045h20v16h-9l-4 4v-4h-7z" fill="#fff" />
        <path d="M1872 1050.500h14M1872 1054.500h14" stroke="#222" strokeWidth="1.300" />
        <circle cx="1888.500" cy="1064.500" r="9.500" fill="#2b2b2b" stroke="#777" />
        <text x="1884.500" y="1070" fontSize="15" fill="#fff">1</text>
      </I>
      <span className="ml-[13px] w-px bg-[#6a6a6a]" />
    </div>
  );
}

export default function App() {
  return (
    <div className="flex h-[1080px] w-[1920px] flex-col overflow-hidden font-['Open_Sans','Noto_Sans',sans-serif]">
      <TitleBar />
      <Ribbon />
      <FormulaBar />
      <Sheet />
      <TabsBar />
      <StatusBar />
      <Taskbar />
    </div>
  );
}
